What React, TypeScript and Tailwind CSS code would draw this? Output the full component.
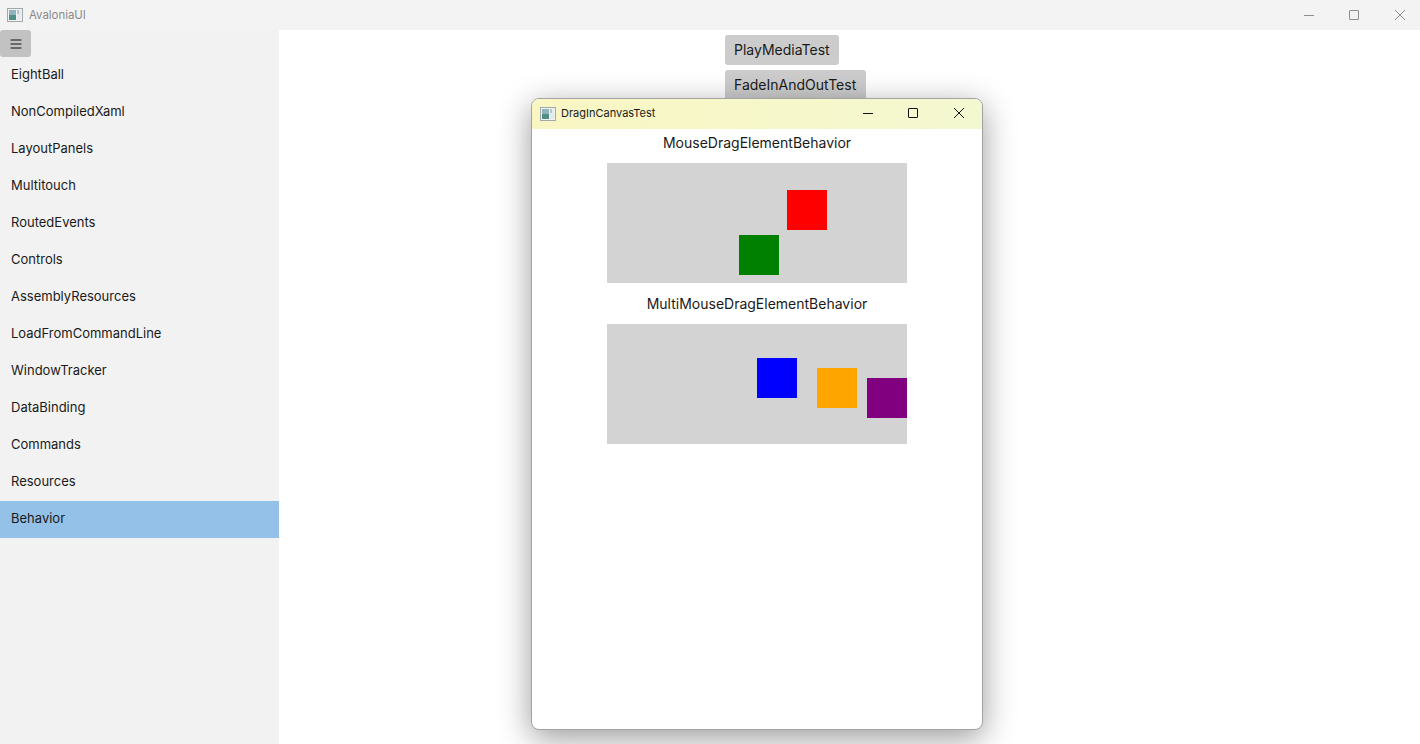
const items = [
  'EightBall',
  'NonCompiledXaml',
  'LayoutPanels',
  'Multitouch',
  'RoutedEvents',
  'Controls',
  'AssemblyResources',
  'LoadFromCommandLine',
  'WindowTracker',
  'DataBinding',
  'Commands',
  'Resources',
  'Behavior',
]

function AppIcon({ className }: { className?: string }) {
  return (
    <svg className={className} viewBox="0 0 16 16" width="16" height="16">
      <rect x="0.5" y="1.5" width="15" height="13" fill="#f2f4f4" stroke="#a2a8aa" />
      <rect x="2" y="3" width="7" height="10" fill="#8fb4bb" />
      <rect x="2" y="8" width="7" height="5" fill="#4f8f86" />
      <rect x="10" y="3" width="4" height="10" fill="#e4e9ea" />
      <rect x="10" y="3" width="2" height="4" fill="#b9c6ca" />
    </svg>
  )
}

function WindowButtons({ stroke }: { stroke: string }) {
  return (
    <>
      <svg width="12" height="12" viewBox="0 0 12 12" fill="none" stroke={stroke}>
        <path d="M2 6.5h10" />
      </svg>
      <svg width="12" height="12" viewBox="0 0 12 12" fill="none" stroke={stroke}>
        <rect x="1.5" y="1.5" width="9" height="9" rx="0.5" />
      </svg>
      <svg width="12" height="12" viewBox="0 0 12 12" fill="none" stroke={stroke}>
        <path d="M1 1l10 10M11 1L1 11" />
      </svg>
    </>
  )
}

function Square({ className }: { className: string }) {
  return <div className={`absolute w-10 h-10 ${className}`} />
}

export default function App() {
  return (
    <div className="relative w-[1420px] h-[744px] overflow-hidden bg-white text-sm text-[#1a1a1a] font-['Inter',sans-serif]">
      <div className="flex items-center h-[30px] bg-[#f3f3f3]">
        <AppIcon className="ml-[7px]" />
        <span className="ml-[6px] text-[11.4px] text-[#8a8a8a]">AvaloniaUI</span>
        <div className="ml-auto flex items-center gap-[34px] mr-[14px]">
          <WindowButtons stroke="#8f8f8f" />
        </div>
      </div>

      <div className="flex h-[714px]">
        <div className="w-[279px] bg-[#f2f2f2]">
          <div className="flex items-center justify-center w-[31px] h-[27px] rounded-[3px] bg-[#c2c2c2]">
            <svg width="12" height="12" viewBox="0 0 12 12" stroke="#4d4d4d" strokeWidth="1.6">
              <path d="M0.5 2h11M0.5 6h11M0.5 10h11" />
            </svg>
          </div>
          {items.map((item) => (
            <div
              key={item}
              className={`flex items-center h-[37px] pl-[11px] pb-[2px] text-[13px] ${item === 'Behavior' ? 'bg-[#93c1e8]' : ''}`}
            >
              {item}
            </div>
          ))}
        </div>

        <div className="flex flex-col items-start gap-[5px] pt-[5px] pl-[446px]">
          <div className="flex items-center h-[30px] px-[9px] rounded-[3px] bg-[#cccccc]">PlayMediaTest</div>
          <div className="flex items-center h-[30px] pl-[9px] pr-[10px] rounded-[3px] bg-[#cccccc]">FadeInAndOutTest</div>
        </div>
      </div>

      <div className="absolute left-[531px] top-[98px] w-[452px] h-[632px] rounded-[8px] border border-[#a3a3a3] bg-white overflow-hidden shadow-[0_8px_32px_rgba(0,0,0,0.4)]">
        <div className="flex items-center h-[30px] bg-gradient-to-r from-[#f9f6c3] to-[#f4f8d0]">
          <AppIcon className="ml-[8px]" />
          <span className="ml-[5px] text-[11px]">DragInCanvasTest</span>
          <div className="ml-auto flex items-center gap-[34px] mr-[17px] pb-[2px]">
            <WindowButtons stroke="#111111" />
          </div>
        </div>
        <div className="flex flex-col items-center">
          <div className="flex items-center h-[34px] pb-[6px]">MouseDragElementBehavior</div>
          <div className="relative w-[300px] h-[120px] bg-[#d3d3d3]">
            <Square className="left-[180px] top-[27px] bg-[#ff0000]" />
            <Square className="left-[132px] top-[72px] bg-[#008000]" />
          </div>
          <div className="flex items-center h-[41px]">MultiMouseDragElementBehavior</div>
          <div className="relative w-[300px] h-[120px] bg-[#d3d3d3]">
            <Square className="left-[150px] top-[34px] bg-[#0000ff]" />
            <Square className="left-[210px] top-[44px] bg-[#ffa500]" />
            <Square className="left-[260px] top-[54px] bg-[#800080]" />
          </div>
        </div>
      </div>
    </div>
  )
}
